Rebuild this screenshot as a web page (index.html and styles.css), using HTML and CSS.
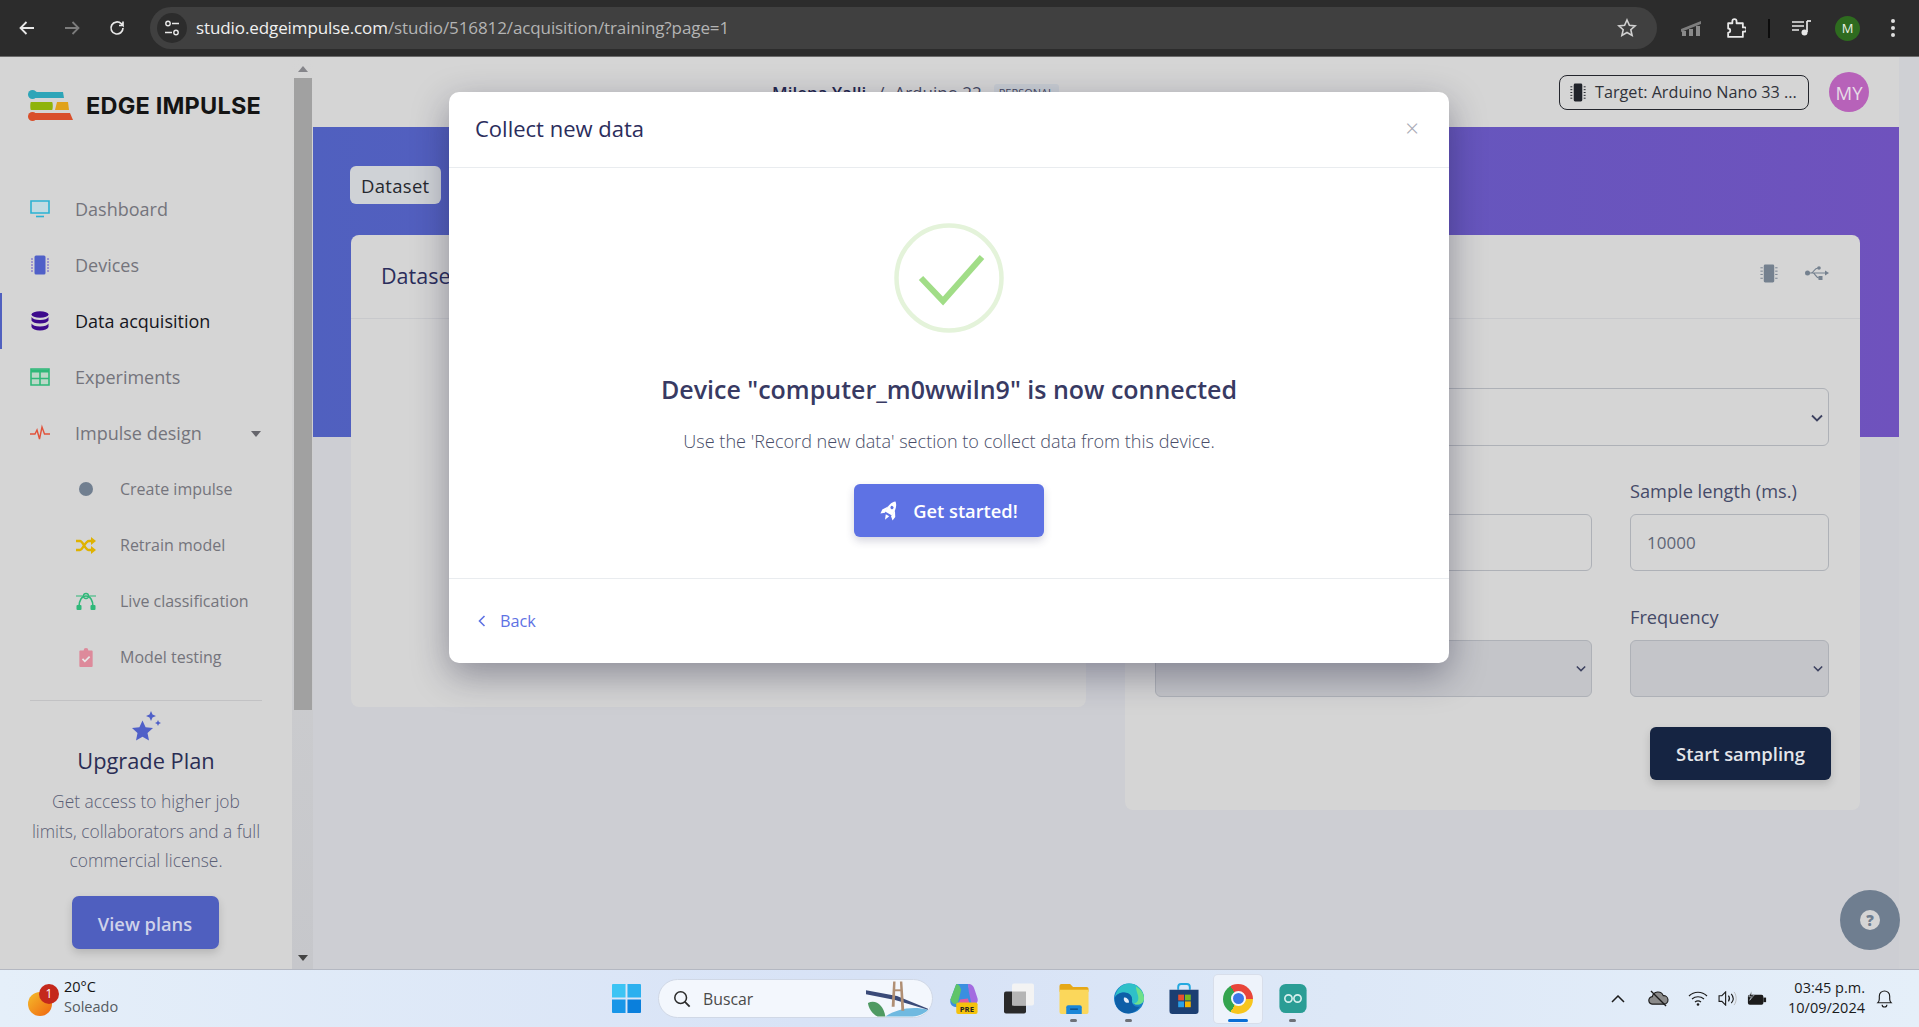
FILE: index.html
```html
<!DOCTYPE html>
<html lang="en">
  <head>
    <meta charset="UTF-8" />
    <title>Data acquisition - Edge Impulse</title>
    <link rel="stylesheet" href="styles.css">
  </head>
  <body>
    <!-- browser toolbar -->
    <header class="chrome-bar">
      <div class="chrome-nav">
        <svg class="chrome-icon" viewBox="0 0 20 20"><path d="M17 10H4M9.500 4 3.500 10l6 6" fill="none" stroke="#e8e8e8" stroke-width="1.800"/></svg>
        <svg class="chrome-icon" viewBox="0 0 20 20"><path d="M3 10h13M10.500 4l6 6-6 6" fill="none" stroke="#7c7c7c" stroke-width="1.800"/></svg>
        <svg class="chrome-icon" viewBox="0 0 20 20"><path d="M16 10a6 6 0 1 1-1.800-4.300L16 7.500V3.500M16 7.500h-4" fill="none" stroke="#e8e8e8" stroke-width="1.700"/></svg>
      </div>
      <div class="address-pill">
        <span class="site-icon">
          <svg viewBox="0 0 18 18" width="18" height="18"><circle cx="5" cy="4.500" r="2.200" fill="none" stroke="#e8e8e8" stroke-width="1.400"/><path d="M9 4.500h7M2 13.500h7" stroke="#e8e8e8" stroke-width="1.400"/><circle cx="13" cy="13.500" r="2.200" fill="none" stroke="#e8e8e8" stroke-width="1.400"/></svg>
        </span>
        <span class="url"><b>studio.edgeimpulse.com</b>/studio/516812/acquisition/training?page=1</span>
        <svg class="star-icon" viewBox="0 0 20 20"><path d="M10 2l2.400 5.300 5.700.6-4.300 3.800 1.300 5.700L10 14.500l-5.100 2.900 1.300-5.700L1.900 7.900l5.700-.6z" fill="none" stroke="#d0d0d0" stroke-width="1.600"/></svg>
      </div>
      <div class="chrome-tools">
        <svg class="tool-chart" viewBox="0 0 20 16"><path d="M0 9l20-8v3L0 12z" fill="#7d7d7d"/><path d="M1 11h4v5H1zM8 9h4v7H8zM15 6h4v10h-4z" fill="#8a8a8a"/></svg>
        <svg class="tool-puzzle" viewBox="0 0 20 20"><path d="M3 5h4V3a2 2 0 0 1 4 0v2h6v4h1.500a2 2 0 0 1 0 4H17v5H3v-4a2 2 0 0 0 0-4z" fill="none" stroke="#e8e8e8" stroke-width="1.700" stroke-linejoin="round"/></svg>
        <span class="tool-sep"></span>
        <svg class="tool-music" viewBox="0 0 20 16"><path d="M0 2h12M0 6h12M0 10h7" stroke="#e8e8e8" stroke-width="1.700"/><path d="M15 1v11" stroke="#e8e8e8" stroke-width="1.700"/><path d="M15 1h4" stroke="#e8e8e8" stroke-width="1.700"/><circle cx="12.500" cy="12.500" r="3" fill="#e8e8e8"/></svg>
        <span class="profile-dot">M</span>
        <span class="kebab"><i></i><i></i><i></i></span>
      </div>
    </header>

    <div class="page">
      <aside class="sidebar">
        <div class="logo">
          <svg class="logo-mark" viewBox="0 0 45 31">
            <circle cx="4.500" cy="4.500" r="4.500" fill="#2ea5b8"/><path d="M4 2h31l1 6H4z" fill="#2ea5b8"/>
            <path d="M3 12h21c1 0 1 8 0 8H3c-1 0-1-8 0-8z" fill="#8fb30a"/><path d="M29 12h11l1 8H27z" fill="#e0a21b"/>
            <circle cx="4.500" cy="26.500" r="4.500" fill="#d94f2b"/><path d="M4 23h38l3 7H4z" fill="#d94f2b"/>
          </svg>
          <span class="logo-text">EDGE IMPULSE</span>
        </div>
        <nav class="nav">
          <a class="nav-item">
            <svg class="nav-icon" viewBox="0 0 20 18"><path d="M1 1h18v12H1z" fill="#c3dbe2" stroke="#2bb2d3" stroke-width="1.600"/><path d="M6 16.500h8" stroke="#2bb2d3" stroke-width="1.600"/></svg>
            Dashboard
          </a>
          <a class="nav-item">
            <svg class="nav-icon" viewBox="0 0 20 20"><rect x="4.500" y="0.500" width="11" height="19" rx="1.500" fill="#5060c8"/><path d="M1 4h2M1 7h2M1 10h2M1 13h2M1 16h2M17 4h2M17 7h2M17 10h2M17 13h2M17 16h2" stroke="#6a5bc8" stroke-width="1"/></svg>
            Devices
          </a>
          <a class="nav-item active">
            <svg class="nav-icon" viewBox="0 0 18 20"><ellipse cx="9" cy="3.500" rx="8.500" ry="3.300" fill="#3c0a8c"/><path d="M.5 6c1 2 4 3 8.500 3s7.500-1 8.500-3v3.500c-1 2-4 3-8.500 3s-7.500-1-8.500-3z" fill="#3c0a8c"/><path d="M.5 12.500c1 2 4 3 8.500 3s7.500-1 8.500-3v3.500c-1 2-4 3.500-8.500 3.500S1.500 18 .5 16z" fill="#3c0a8c"/></svg>
            Data acquisition
          </a>
          <a class="nav-item">
            <svg class="nav-icon" viewBox="0 0 20 18"><path d="M1 1h18v16H1z" fill="#bcd8c8" stroke="#2fb879" stroke-width="1.600"/><path d="M1 3h18" stroke="#2fb879" stroke-width="3"/><path d="M1 10.500h18M10 4v13" stroke="#2fb879" stroke-width="1.600"/></svg>
            Experiments
          </a>
          <a class="nav-item">
            <svg class="nav-icon" viewBox="0 0 20 14"><path d="M0 8h5l2-4 2.500 9L12 1l2.500 7H20" fill="none" stroke="#e2523a" stroke-width="1.400"/></svg>
            Impulse design
            <span class="caret"></span>
          </a>
          <a class="nav-item sub">
            <span class="sub-slot"><span class="dot"></span></span>
            Create impulse
          </a>
          <a class="nav-item sub">
            <span class="sub-slot">
              <svg class="sub-icon" viewBox="0 0 20 17"><path d="M0 4h4c3 0 5 9 9 9h3M0 13h4c3 0 5-9 9-9h3" fill="none" stroke="#dfb200" stroke-width="2.400"/><path d="M15 0l5 4-5 4zM15 9l5 4-5 4z" fill="#dfb200"/></svg>
            </span>
            Retrain model
          </a>
          <a class="nav-item sub">
            <span class="sub-slot">
              <svg class="sub-icon" viewBox="0 0 20 17"><path d="M3 14C3 7 6 3 10 3s7 4 7 11" fill="none" stroke="#2fb879" stroke-width="1.700"/><rect x="0.500" y="12" width="5" height="5" rx="1" fill="#2fb879"/><rect x="14.500" y="12" width="5" height="5" rx="1" fill="#2fb879"/><circle cx="10" cy="3" r="2.500" fill="none" stroke="#2fb879" stroke-width="1.300"/><path d="M0 3h7M13 3h7" stroke="#2fb879" stroke-width="1.200"/></svg>
            </span>
            Live classification
          </a>
          <a class="nav-item sub">
            <span class="sub-slot">
              <svg class="sub-icon" viewBox="0 0 15 20"><path d="M1.500 2.500h3.500a2.500 2.500 0 0 1 5 0h3.500a1 1 0 0 1 1 1V19a1 1 0 0 1-1 1h-12a1 1 0 0 1-1-1V3.500a1 1 0 0 1 1-1z" fill="#dd8a9b"/><path d="M3.800 11.500l2.500 2.500 5-5" fill="none" stroke="#e8e8e8" stroke-width="1.800"/></svg>
            </span>
            Model testing
          </a>
        </nav>
        <div class="upgrade">
          <svg class="upgrade-star" viewBox="0 0 31 31"><path d="M11.500 9.500l3.100 6.800 7.400.8-5.500 5 1.500 7.300-6.500-3.700L5 29.400l1.500-7.300-5.500-5 7.400-.8z" fill="#5060c8"/><path d="M20 0l1.500 3.500L25 5l-3.500 1.500L20 10l-1.500-3.500L15 5l3.500-1.500zM27 9l.9 2.100L30 12l-2.100.9L27 15l-.9-2.100L24 12l2.100-.9z" fill="#5060c8"/></svg>
          <h3 class="upgrade-title">Upgrade Plan</h3>
          <p class="upgrade-text">Get access to higher job limits, collaborators and a full commercial license.</p>
          <button class="upgrade-btn">View plans</button>
        </div>
      </aside>

      <div class="scrollbar">
        <span class="arrow-up"></span>
        <div class="thumb"></div>
        <span class="arrow-down"></span>
      </div>

      <main class="main">
        <div class="topbar">
          <div class="crumbs">
            <span class="crumb-user">Milena Yalli</span>
            <span class="crumb-sep">/</span>
            <span class="crumb-project">Arduino 22</span>
            <span class="crumb-badge">PERSONAL</span>
          </div>
          <button class="target-btn">
            <svg class="target-chip" viewBox="0 0 16 20"><rect x="3.500" y="0.500" width="9" height="19" rx="1.500" fill="#20232a"/><path d="M0 4h2M0 7h2M0 10h2M0 13h2M0 16h2M14 4h2M14 7h2M14 10h2M14 13h2M14 16h2" stroke="#20232a" stroke-width="1"/></svg>
            Target: Arduino Nano 33 ...
          </button>
          <span class="avatar">MY</span>
        </div>
        <div class="content">
          <div class="tabs"><span class="tab">Dataset</span></div>
          <div class="cards">
            <section class="card card-left">
              <div class="card-head"><h3 class="card-title">Dataset</h3></div>
            </section>
            <section class="card card-right">
              <div class="card-head">
                <div class="card-icons">
                  <svg class="head-chip" viewBox="0 0 18 20"><rect x="3.500" y="0.500" width="11" height="19" rx="1.500" fill="#75818f"/><path d="M0 4h2.500M0 7.500h2.500M0 11h2.500M0 15h2.500M15.500 4H18M15.500 7.500H18M15.500 11H18M15.500 15H18" stroke="#75818f" stroke-width="1"/></svg>
                  <svg class="head-usb" viewBox="0 0 24 14"><circle cx="2.500" cy="7" r="2.500" fill="#75818f"/><path d="M2 7h19M6 7c3 0 3-5 7-5M8 7c2 0 3 5 6 5" fill="none" stroke="#75818f" stroke-width="1.200"/><path d="M20 4.500L24 7l-4 2.500z" fill="#75818f"/><circle cx="14" cy="2" r="1.800" fill="#75818f"/><rect x="13.500" y="10" width="4" height="4" fill="#75818f"/></svg>
                </div>
              </div>
              <form class="record-form">
                <div class="field full">
                  <div class="select-wrap tall-offset"><select class="control tall"></select><svg class="select-arrow big" viewBox="0 0 12 8"><path d="M1 1.500l5 5 5-5" fill="none" stroke="#3d4260" stroke-width="1.800"/></svg></div>
                </div>
                <div class="field">
                  <span class="field-gap"></span>
                  <input class="control spaced" type="text" />
                </div>
                <div class="field">
                  <label>Sample length (ms.)</label>
                  <input class="control spaced" type="text" value="10000" />
                </div>
                <div class="field">
                  <span class="field-gap"></span>
                  <div class="select-wrap"><select class="control shaded"></select><svg class="select-arrow" viewBox="0 0 12 8"><path d="M1 1.500l5 5 5-5" fill="none" stroke="#3d4260" stroke-width="1.800"/></svg></div>
                </div>
                <div class="field">
                  <label>Frequency</label>
                  <div class="select-wrap"><select class="control shaded"></select><svg class="select-arrow" viewBox="0 0 12 8"><path d="M1 1.500l5 5 5-5" fill="none" stroke="#3d4260" stroke-width="1.800"/></svg></div>
                </div>
                <div class="form-actions full"><button type="button" class="sample-btn">Start sampling</button></div>
              </form>
            </section>
          </div>
          <button class="help-btn"><span>?</span></button>
        </div>
      </main>
      <div class="page-track"></div>
    </div>

    <!-- windows taskbar -->
    <footer class="taskbar">
      <div class="weather">
        <span class="sun"><span class="sun-badge">1</span></span>
        <div class="weather-text"><span>20°C</span><span class="weather-sub">Soleado</span></div>
      </div>
      <div class="task-center">
        <svg class="win-logo" viewBox="0 0 30 30"><path d="M0 1a1 1 0 0 1 1-1h13v14H0z" fill="#3cc4f4"/><path d="M16 0h13a1 1 0 0 1 1 1v13H16z" fill="#2cb0ef"/><path d="M0 16h14v14H1a1 1 0 0 1-1-1z" fill="#1896e8"/><path d="M16 16h14v13a1 1 0 0 1-1 1H16z" fill="#0a7fdc"/></svg>
        <div class="search">
          <svg class="search-glass" viewBox="0 0 20 20"><circle cx="8.500" cy="8.500" r="6.500" fill="none" stroke="#2b2b2b" stroke-width="1.700"/><path d="M13 13l5.500 5.500" stroke="#2b2b2b" stroke-width="2"/></svg>
          <span class="search-text">Buscar</span>
          <svg class="search-art" viewBox="0 0 64 36"><path d="M20 36c12-8 28-11 44-7-4 5-12 7-18 7z" fill="#6fb9e0"/><path d="M0 9l32 6 32 13v1L30 19 0 13z" fill="#3a4a78"/><path d="M28 0h2.500l-1 26h-3zM35 0h2.500l2 30h-3z" fill="#b08f74"/><path d="M28 8h9v2h-9z" fill="#b08f74"/><path d="M2 22c8-4 16 2 18 14H12C6 33 3 28 2 22z" fill="#4f9a62"/></svg>
        </div>
        <div class="task-icons">
          <span class="task-slot">
            <svg class="task-icon" viewBox="0 0 30 32"><path d="M7 1h12l5 18c1 4-2 6-5 6H8C3 25 0 22 1 17z" fill="#3a8fe0"/><path d="M1 17L7 1c3 0 4 3 5 6l-3 12c-1 4-6 4-8-2z" fill="#5fc46a"/><path d="M19 1c4 0 6 2 7 6l3 9c1 4-2 7-6 7l-3-14z" fill="#a36be0"/><path d="M8 25h14l-3-9-8 1z" fill="#e25aa0"/><rect x="7" y="20" width="22" height="12" rx="2" fill="#f4c20d"/><text x="18" y="29.500" class="pre-text">PRE</text></svg>
          </span>
          <span class="task-slot">
            <svg class="task-icon" viewBox="0 0 30 30"><rect x="0" y="8" width="22" height="22" rx="2" fill="#2a2a2a"/><rect x="8" y="0" width="22" height="22" rx="2" fill="#f3f3f3"/><rect x="8" y="8" width="14" height="14" fill="#b5b5b5"/></svg>
          </span>
          <span class="task-slot running">
            <svg class="task-icon" viewBox="0 0 30 32"><path d="M0 3a2 2 0 0 1 2-2h9l3 3h14a2 2 0 0 1 2 2v3H0z" fill="#e6a817"/><path d="M0 7h30v23a2 2 0 0 1-2 2H2a2 2 0 0 1-2-2z" fill="#fbd75b"/><path d="M7 25a2 2 0 0 1 2-2h12a2 2 0 0 1 2 2v7H7z" fill="#1a86d8"/><path d="M11 27h8" stroke="#0d4f8a" stroke-width="1.500"/></svg>
          </span>
          <span class="task-slot running">
            <svg class="task-icon" viewBox="0 0 30 30"><circle cx="15" cy="15" r="15" fill="#1a7fc8"/><path d="M15 0c8 0 15 6 15 15 0 4-3 6-7 6-3 0-5-1-5-3 1-5-3-9-8-9-4 0-8 2-9 5C2 6 8 0 15 0z" fill="#2fc0c8"/><path d="M22 3c5 3 8 7 8 12 0 4-3 6-7 6-1 0-2 0-3-1 4-1 5-4 4-8-1-3-2-6-2-9z" fill="#6fe08a"/><path d="M1 14c2-4 6-5 9-5 5 0 9 3 8 9 0 4 4 6 8 5-3 4-7 7-12 7C6 30 0 23 1 14z" fill="#0d5fa8"/><path d="M10 14c3 0 5 2 5 5-3 1-6-1-5-5z" fill="#e4ecf8"/></svg>
          </span>
          <span class="task-slot">
            <svg class="task-icon" viewBox="0 0 30 32"><path d="M9 7V4a3 3 0 0 1 3-3h6a3 3 0 0 1 3 3v3" fill="none" stroke="#25a9e0" stroke-width="2"/><path d="M0 7h30v22a3 3 0 0 1-3 3H3a3 3 0 0 1-3-3z" fill="#1c3f72"/><path d="M9 12h6v6H9z" fill="#e8502e"/><path d="M16 12h6v6h-6z" fill="#7bb820"/><path d="M9 19h6v6H9z" fill="#2aa0e8"/><path d="M16 19h6v6h-6z" fill="#f4b400"/></svg>
          </span>
          <span class="task-slot chrome-slot">
            <span class="chrome-logo"><span class="chrome-core"></span></span>
          </span>
          <span class="task-slot running">
            <svg class="task-icon arduino" viewBox="0 0 30 32"><rect x="0" y="0" width="30" height="32" rx="7" fill="#2a9d95"/><circle cx="10" cy="16" r="4" fill="none" stroke="#d8f0ee" stroke-width="1.800"/><circle cx="20" cy="16" r="4" fill="none" stroke="#d8f0ee" stroke-width="1.800"/></svg>
          </span>
        </div>
      </div>
      <div class="tray">
        <svg class="tray-chevron" viewBox="0 0 14 8"><path d="M1 7l6-6 6 6" fill="none" stroke="#1c1c1c" stroke-width="1.500"/></svg>
        <svg class="tray-cloud" viewBox="0 0 22 18"><path d="M5 15a4 4 0 0 1-.5-8A6 6 0 0 1 16 6a4.500 4.500 0 0 1 1 9z" fill="#8a8a8a" stroke="#1c1c1c" stroke-width="1.200"/><path d="M3 1l16 16" stroke="#1c1c1c" stroke-width="1.400"/></svg>
        <svg class="tray-wifi" viewBox="0 0 20 15"><path d="M1 5c5-5 13-5 18 0M4 8c3.500-3 8.500-3 12 0M7 11c2-1.500 4-1.500 6 0" fill="none" stroke="#1c1c1c" stroke-width="1.200"/><circle cx="10" cy="13.500" r="1.300" fill="#1c1c1c"/></svg>
        <svg class="tray-volume" viewBox="0 0 20 16"><path d="M1 5h3l4-4v14l-4-4H1z" fill="none" stroke="#1c1c1c" stroke-width="1.200"/><path d="M11 5c1.500 2 1.500 4 0 6M14 3c2.500 3 2.500 7 0 10" fill="none" stroke="#1c1c1c" stroke-width="1.200"/><path d="M17 1c3 4 3 10 0 14" fill="none" stroke="#bbb" stroke-width="1"/></svg>
        <svg class="tray-battery" viewBox="0 0 22 16"><rect x="1" y="4" width="17" height="11" rx="2" fill="#1c1c1c"/><rect x="18" y="7" width="3" height="5" fill="#1c1c1c"/><path d="M5 0L2 6h3L3 10l5-6H5z" fill="#1c1c1c" stroke="#e4eef8" stroke-width=".6"/></svg>
        <div class="clock"><span>03:45 p.m.</span><span>10/09/2024</span></div>
        <svg class="tray-bell" viewBox="0 0 18 19"><path d="M2 14c1-1 1.500-2 1.500-4V7a5.500 5.500 0 0 1 11 0v3c0 2 .5 3 1.500 4zM6.500 16a2.500 2.500 0 0 0 5 0" fill="none" stroke="#1c1c1c" stroke-width="1.200"/></svg>
      </div>
    </footer>

    <!-- dialog -->
    <div class="modal-layer">
      <div class="modal">
        <div class="modal-head">
          <h2 class="modal-title">Collect new data</h2>
          <span class="modal-close">×</span>
        </div>
        <div class="modal-body">
          <svg class="check-ring" viewBox="0 0 110 110">
            <circle cx="55" cy="55" r="52.500" fill="none" stroke="#e4f3da" stroke-width="4.500"/>
            <path d="M27 55l22 23 39-44" fill="none" stroke="#a1dd87" stroke-width="6"/>
          </svg>
          <h2 class="modal-heading">Device "computer_m0wwiln9" is now connected</h2>
          <p class="modal-sub">Use the 'Record new data' section to collect data from this device.</p>
          <button class="start-btn">
            <svg class="rocket" viewBox="0 0 20 20"><g transform="rotate(30 10 10)"><path d="M10 -1C14 2 14.500 8 14 13H6C5.500 8 6 2 10 -1z" fill="#fff"/><path d="M6 7L2.500 12.500 3 17l3.500-3zM14 7l3.500 5.500L17 17l-3.500-3z" fill="#fff"/><path d="M8 15h4l-2 5z" fill="#fff"/><circle cx="10" cy="6" r="1.600" fill="#5e72e4"/></g></svg>
            Get started!
          </button>
        </div>
        <div class="modal-foot">
          <a class="back-link">
            <svg class="back-chevron" viewBox="0 0 8 12"><path d="M6.500 1L1.500 6l5 5" fill="none" stroke="#5e72e4" stroke-width="1.600"/></svg>
            Back
          </a>
        </div>
      </div>
    </div>
  </body>
</html>
```

FILE: styles.css
```css
* {
  box-sizing: border-box;
}
html,
body {
  margin: 0;
  height: 100%;
}
body {
  position: relative;
  display: flex;
  flex-direction: column;
  height: 1027px;
  overflow: hidden;
  font-family: "Open Sans", sans-serif;
  background: #cdced3;
}
h2,
h3,
p {
  margin: 0;
}
button {
  font-family: inherit;
  border: none;
}

/* browser toolbar */
.chrome-bar {
  display: flex;
  align-items: center;
  flex: 0 0 57px;
  height: 57px;
  background: #2c2c2c;
  border-bottom: 1px solid #6a6a6a;
}
.chrome-nav {
  display: flex;
  width: 150px;
  padding-left: 17px;
  gap: 25px;
}
.chrome-icon {
  width: 20px;
  height: 20px;
}
.address-pill {
  display: flex;
  align-items: center;
  width: 1507px;
  height: 42px;
  padding: 0 20px 0 7px;
  background: #404040;
  border-radius: 21px;
}
.site-icon {
  display: flex;
  align-items: center;
  justify-content: center;
  width: 30px;
  height: 30px;
  border-radius: 50%;
  background: #2c2c2c;
}
.url {
  margin: -2px 0 0 9px;
  font-size: 17px;
  letter-spacing: -0.1px;
  color: #b4b4b4;
}
.url b {
  font-weight: 400;
  color: #f0f0f0;
}
.star-icon {
  width: 20px;
  height: 20px;
  margin-left: auto;
}
.chrome-tools {
  display: flex;
  align-items: center;
  padding-left: 24px;
}
.tool-chart {
  width: 20px;
  height: 16px;
}
.tool-puzzle {
  width: 21px;
  height: 21px;
  margin-left: 24px;
}
.tool-sep {
  width: 2px;
  height: 19px;
  margin-left: 22px;
  background: #0c0c0c;
}
.tool-music {
  width: 20px;
  height: 16px;
  margin-left: 22px;
}
.profile-dot {
  display: flex;
  align-items: center;
  justify-content: center;
  width: 25px;
  height: 25px;
  margin-left: 23px;
  border-radius: 50%;
  background: #2e6b1f;
  color: #eaf2e6;
  font-size: 13px;
}
.kebab {
  display: flex;
  flex-direction: column;
  gap: 3px;
  margin-left: 31px;
}
.kebab i {
  width: 4px;
  height: 4px;
  border-radius: 50%;
  background: #e0e0e0;
}

/* page */
.page {
  display: flex;
  flex: 1;
  min-height: 0;
}
.sidebar {
  display: flex;
  flex-direction: column;
  flex: 0 0 292px;
  background: #d5d5d5;
}
.logo {
  display: flex;
  align-items: center;
  height: 124px;
  padding: 0 0 28px 28px;
  gap: 13px;
}
.logo-mark {
  width: 45px;
  height: 31px;
}
.logo-text {
  font-family: Inter, sans-serif;
  font-size: 23.500px;
  font-weight: 700;
  letter-spacing: 0.2px;
  color: #141414;
}
.nav-item {
  position: relative;
  display: flex;
  align-items: center;
  height: 56px;
  padding-left: 30px;
  font-size: 18px;
  color: #74747c;
}
.nav-item.active {
  color: #16161e;
  box-shadow: inset 2px 0 0 #5060bf;
}
.nav-icon {
  width: 20px;
  height: 20px;
  margin-right: 25px;
}
.caret {
  position: absolute;
  left: 251px;
  top: 26px;
  border-left: 5.500px solid transparent;
  border-right: 5.500px solid transparent;
  border-top: 6px solid #66666c;
}
.nav-item.sub {
  padding-left: 74px;
  font-size: 16px;
}
.sub-slot {
  display: flex;
  align-items: center;
  justify-content: center;
  width: 24px;
  margin-right: 22px;
}
.sub-icon {
  width: 20px;
  height: 19px;
}
.dot {
  width: 14px;
  height: 14px;
  border-radius: 50%;
  background: #717f90;
}
.upgrade {
  display: flex;
  flex-direction: column;
  align-items: center;
  margin: 15px 30px 0;
  padding-top: 10px;
  border-top: 1px solid #c2c2c4;
}
.upgrade-star {
  width: 31px;
  height: 31px;
}
.upgrade-title {
  margin-top: 4px;
  font-size: 21.800px;
  line-height: 29px;
  font-weight: 500;
  color: #2a2d54;
}
.upgrade-text {
  width: 233px;
  margin: 12px -2px 0;
  font-size: 17.400px;
  line-height: 29.500px;
  font-weight: 300;
  color: #5b6076;
  text-align: center;
}
.upgrade-btn {
  width: 147px;
  height: 53px;
  margin: 20px 2px 0 0;
  border-radius: 7px;
  background: #4f5fbf;
  box-shadow: 0 4px 8px rgba(0, 0, 0, 0.15);
  color: #cfd2ea;
  font-size: 18.300px;
  line-height: 53px;
  font-weight: 600;
}
.scrollbar {
  display: flex;
  flex-direction: column;
  align-items: center;
  flex: 0 0 21px;
  background: linear-gradient(#d5d5d5, #c6c7cb);
}
.arrow-up {
  flex: none;
  width: 0;
  height: 0;
  margin-top: 9px;
  border-left: 5px solid transparent;
  border-right: 5px solid transparent;
  border-bottom: 6px solid #85858a;
}
.thumb {
  flex: 0 0 632px;
  width: 18px;
  margin-top: 6px;
  background: #a1a1a1;
}
.arrow-down {
  flex: none;
  width: 0;
  height: 0;
  margin-top: auto;
  margin-bottom: 8px;
  border-left: 5px solid transparent;
  border-right: 5px solid transparent;
  border-top: 6px solid #444;
}
.main {
  display: flex;
  flex-direction: column;
  flex: 1;
  min-width: 0;
}
.topbar {
  display: flex;
  align-items: center;
  flex: 0 0 70px;
  padding: 0 30px 0 459px;
  background: #d5d5d5;
}
.crumbs {
  display: flex;
  align-items: center;
  gap: 10px;
  font-size: 17px;
  color: #44475f;
}
.crumb-user {
  margin-right: 2px;
  font-weight: 600;
  color: #22264e;
}
.crumb-badge {
  margin-left: 2px;
  font-size: 11px;
  padding: 1px 5px;
  background: #c8cdd3;
  border-radius: 3px;
}
.target-btn {
  display: flex;
  align-items: center;
  width: 250px;
  height: 35px;
  margin-left: auto;
  padding: 0 0 0 10px;
  border: 1px solid #24262d;
  border-radius: 8px;
  background: transparent;
  color: #30323a;
  font-size: 16.200px;
  white-space: nowrap;
}
.target-chip {
  width: 16px;
  height: 19px;
  margin-right: 9px;
}
.avatar {
  display: flex;
  align-items: center;
  justify-content: center;
  width: 40px;
  height: 40px;
  margin-left: 20px;
  border-radius: 50%;
  background: #b762b9;
  color: #e6dbe6;
  font-size: 18.500px;
}
.content {
  position: relative;
  flex: 1;
  padding: 39px 39px 0 38px;
  background: linear-gradient(90deg, #5060bf, #6f52bd) no-repeat;
  background-size: 100% 310px;
}
.tabs {
  display: flex;
  margin-left: -1px;
}
.tab {
  display: flex;
  align-items: center;
  height: 38px;
  padding: 0 12px 0 11px;
  background: #cfd2d6;
  border-radius: 6px;
  color: #26282e;
  font-size: 18.500px;
  letter-spacing: 0.3px;
}
.cards {
  display: grid;
  grid-template-columns: 1fr 1fr;
  gap: 39px;
  align-items: start;
  margin-top: 31px;
}
.card {
  background: #d5d5d5;
  border-radius: 8px;
}
.card-left {
  height: 472px;
}
.card-right {
  height: 575px;
}
.card-head {
  display: flex;
  align-items: center;
  justify-content: space-between;
  height: 84px;
  padding: 0 31px 0 30px;
  border-bottom: 1px solid #c8c9cc;
}
.card-title {
  margin-top: -2px;
  font-size: 21.500px;
  font-weight: 500;
  color: #2b2d5c;
}
.card-icons {
  display: flex;
  align-items: center;
  gap: 27px;
  margin: -7px 0 0 auto;
}
.head-chip {
  width: 18px;
  height: 19px;
}
.head-usb {
  width: 24px;
  height: 14px;
}
.record-form {
  display: grid;
  grid-template-columns: 437px 199px;
  gap: 35px 38px;
  padding: 36px 0 0 30px;
}
.full {
  grid-column: 1 / -1;
}
.tall-offset {
  margin-top: 33px;
}
.field label,
.field-gap {
  display: block;
  height: 22px;
  margin: -1px 0 12px;
  font-size: 18.200px;
  line-height: 22px;
  font-weight: 500;
  color: #454a68;
}
.control {
  display: block;
  width: 100%;
  height: 57px;
  padding: 0 16px;
  border: 1px solid #aeb1b7;
  border-radius: 6px;
  background: transparent;
  font-family: inherit;
  font-size: 17px;
  color: #5f6576;
  appearance: none;
}
.control.tall {
  height: 58px;
}
.control.spaced {
  margin-bottom: 1px;
}
.control.shaded {
  background: #c4c5c9;
}
.select-wrap {
  position: relative;
}
.select-arrow {
  position: absolute;
  right: 6px;
  top: 25px;
  width: 10px;
  height: 7px;
}
.select-arrow.big {
  right: 6px;
  top: 26px;
  width: 12px;
  height: 8px;
}
.form-actions {
  display: flex;
  justify-content: flex-end;
  margin: -5px -2px 0 0;
}
.sample-btn {
  width: 181px;
  height: 53px;
  border-radius: 6px;
  background: #152442;
  box-shadow: 0 4px 8px rgba(0, 0, 0, 0.15);
  color: #e4e6ea;
  font-size: 18.400px;
  font-weight: 600;
}
.help-btn {
  position: absolute;
  right: -1px;
  top: 763px;
  display: flex;
  align-items: center;
  justify-content: center;
  width: 60px;
  height: 60px;
  border-radius: 50%;
  background: #6f7e90;
}
.help-btn span {
  width: 20px;
  height: 20px;
  border-radius: 50%;
  background: #d5d5d5;
  color: #6f7e90;
  font-size: 15px;
  line-height: 20px;
  font-weight: 800;
}
.page-track {
  flex: 0 0 20px;
  background: #cfd0d4;
}

/* taskbar */
.taskbar {
  display: flex;
  align-items: center;
  flex: 0 0 58px;
  background: linear-gradient(90deg, #e5eff9, #d7e2f6 45%, #dde8f7 70%, #e5eff9);
  border-top: 1px solid #b4b8c2;
}
.weather {
  display: flex;
  align-items: center;
  width: 612px;
  padding-left: 28px;
}
.sun {
  position: relative;
  width: 24px;
  height: 24px;
  margin: 11px 12px 0 0;
  border-radius: 50%;
  background: linear-gradient(135deg, #f4bd2c, #f0640f);
}
.sun-badge {
  position: absolute;
  left: 11px;
  top: -8px;
  width: 20px;
  height: 20px;
  border-radius: 50%;
  background: #c4281c;
  color: #fff;
  font-size: 12px;
  line-height: 20px;
  text-align: center;
}
.weather-text {
  display: flex;
  flex-direction: column;
  margin-top: -4px;
  font-size: 14.500px;
  line-height: 20px;
  color: #141414;
}
.weather-sub {
  color: #555a60;
}
.task-center {
  display: flex;
  align-items: center;
}
.win-logo {
  width: 29px;
  height: 29px;
}
.search {
  display: flex;
  align-items: center;
  width: 275px;
  height: 39px;
  margin-left: 17px;
  padding: 0 4px 0 14px;
  border-radius: 20px;
  background: #f3f7fd;
  border: 1px solid #d0d8e6;
}
.search-glass {
  width: 18px;
  height: 18px;
}
.search-text {
  margin-left: 12px;
  font-size: 15.800px;
  color: #4a4a4a;
}
.search-art {
  width: 62px;
  height: 36px;
  margin-left: auto;
}
.task-icons {
  display: flex;
  margin-left: 3px;
}
.task-slot {
  position: relative;
  display: flex;
  align-items: center;
  justify-content: center;
  width: 55px;
  height: 48px;
}
.task-icon {
  width: 30px;
  height: 31px;
}
.task-icon.arduino {
  width: 28px;
  height: 29px;
}
.pre-text {
  font-family: "Open Sans", sans-serif;
  font-size: 8px;
  font-weight: 700;
  text-anchor: middle;
  fill: #222;
}
.running::after {
  content: "";
  position: absolute;
  left: 24px;
  bottom: 1px;
  width: 7px;
  height: 3px;
  border-radius: 2px;
  background: #6e7178;
}
.chrome-slot {
  width: 48px;
  margin: 0 3px;
  background: #eef3fb;
  border-radius: 4px;
  box-shadow: 0 0 0 1px #d8deea;
}
.chrome-slot::after {
  content: "";
  position: absolute;
  left: 14px;
  bottom: 1px;
  width: 20px;
  height: 3px;
  border-radius: 2px;
  background: #0a6fd6;
}
.chrome-logo {
  display: flex;
  align-items: center;
  justify-content: center;
  width: 30px;
  height: 30px;
  border-radius: 50%;
  background: conic-gradient(#e8453a 0 90deg, #f7c51e 90deg 210deg, #34a44f 210deg 330deg, #e8453a 330deg);
}
.chrome-core {
  width: 15px;
  height: 15px;
  border-radius: 50%;
  background: #3b78e7;
  border: 2px solid #f4f7fc;
}
.tray {
  display: flex;
  align-items: center;
  margin-left: auto;
  padding-right: 26px;
  position: relative;
}
.tray-chevron {
  width: 14px;
  height: 8px;
}
.tray-cloud {
  width: 21px;
  height: 17px;
  margin-left: 23px;
}
.tray-wifi {
  width: 20px;
  height: 15px;
  margin-left: 19px;
}
.tray-volume {
  width: 19px;
  height: 15px;
  margin-left: 10px;
}
.tray-battery {
  width: 20px;
  height: 15px;
  margin-left: 10px;
}
.clock {
  display: flex;
  flex-direction: column;
  align-items: flex-end;
  width: 98px;
  margin-top: -2px;
  font-size: 14.500px;
  line-height: 20px;
  color: #1a1a1a;
}
.tray-bell {
  width: 17px;
  height: 19px;
  margin-left: 11px;
}

/* dialog */
.modal-layer {
  position: absolute;
  inset: 0;
  padding: 92px 0 0 449px;
}
.modal {
  width: 1000px;
  height: 571px;
  background: #fff;
  border-radius: 10px;
  box-shadow: 0 12px 36px rgba(20, 20, 50, 0.38);
  overflow: hidden;
}
.modal-head {
  display: flex;
  align-items: center;
  justify-content: space-between;
  height: 76px;
  padding: 0 30px 2px 26px;
  border-bottom: 1px solid #e9ecef;
}
.modal-title {
  margin-top: -2px;
  font-size: 22px;
  font-weight: 500;
  color: #2b2d5c;
}
.modal-close {
  margin-top: -2px;
  font-size: 24px;
  font-weight: 300;
  color: #a6a9b4;
}
.modal-body {
  display: flex;
  flex-direction: column;
  align-items: center;
  height: 411px;
  padding-top: 55px;
  border-bottom: 1px solid #e9ecef;
}
.check-ring {
  flex: 0 0 110px;
  width: 110px;
  height: 110px;
}
.modal-heading {
  margin-top: 38px;
  font-size: 25px;
  line-height: 36px;
  font-weight: 600;
  color: #383a63;
}
.modal-sub {
  margin-top: 20px;
  font-size: 18.100px;
  line-height: 28px;
  font-weight: 300;
  color: #484d68;
}
.start-btn {
  display: flex;
  align-items: center;
  justify-content: center;
  width: 190px;
  height: 53px;
  margin-top: 29px;
  border-radius: 6px;
  background: #5e72e4;
  box-shadow: 0 4px 8px rgba(50, 50, 93, 0.2);
  color: #fff;
  font-size: 18.300px;
  font-weight: 600;
}
.rocket {
  width: 20px;
  height: 20px;
  margin-right: 13px;
}
.modal-foot {
  display: flex;
  align-items: center;
  height: 84px;
  padding-left: 29px;
}
.back-link {
  display: flex;
  align-items: center;
  gap: 14px;
  font-size: 16.300px;
  font-weight: 500;
  color: #5e72e4;
}
.back-chevron {
  width: 8px;
  height: 12px;
}
```
